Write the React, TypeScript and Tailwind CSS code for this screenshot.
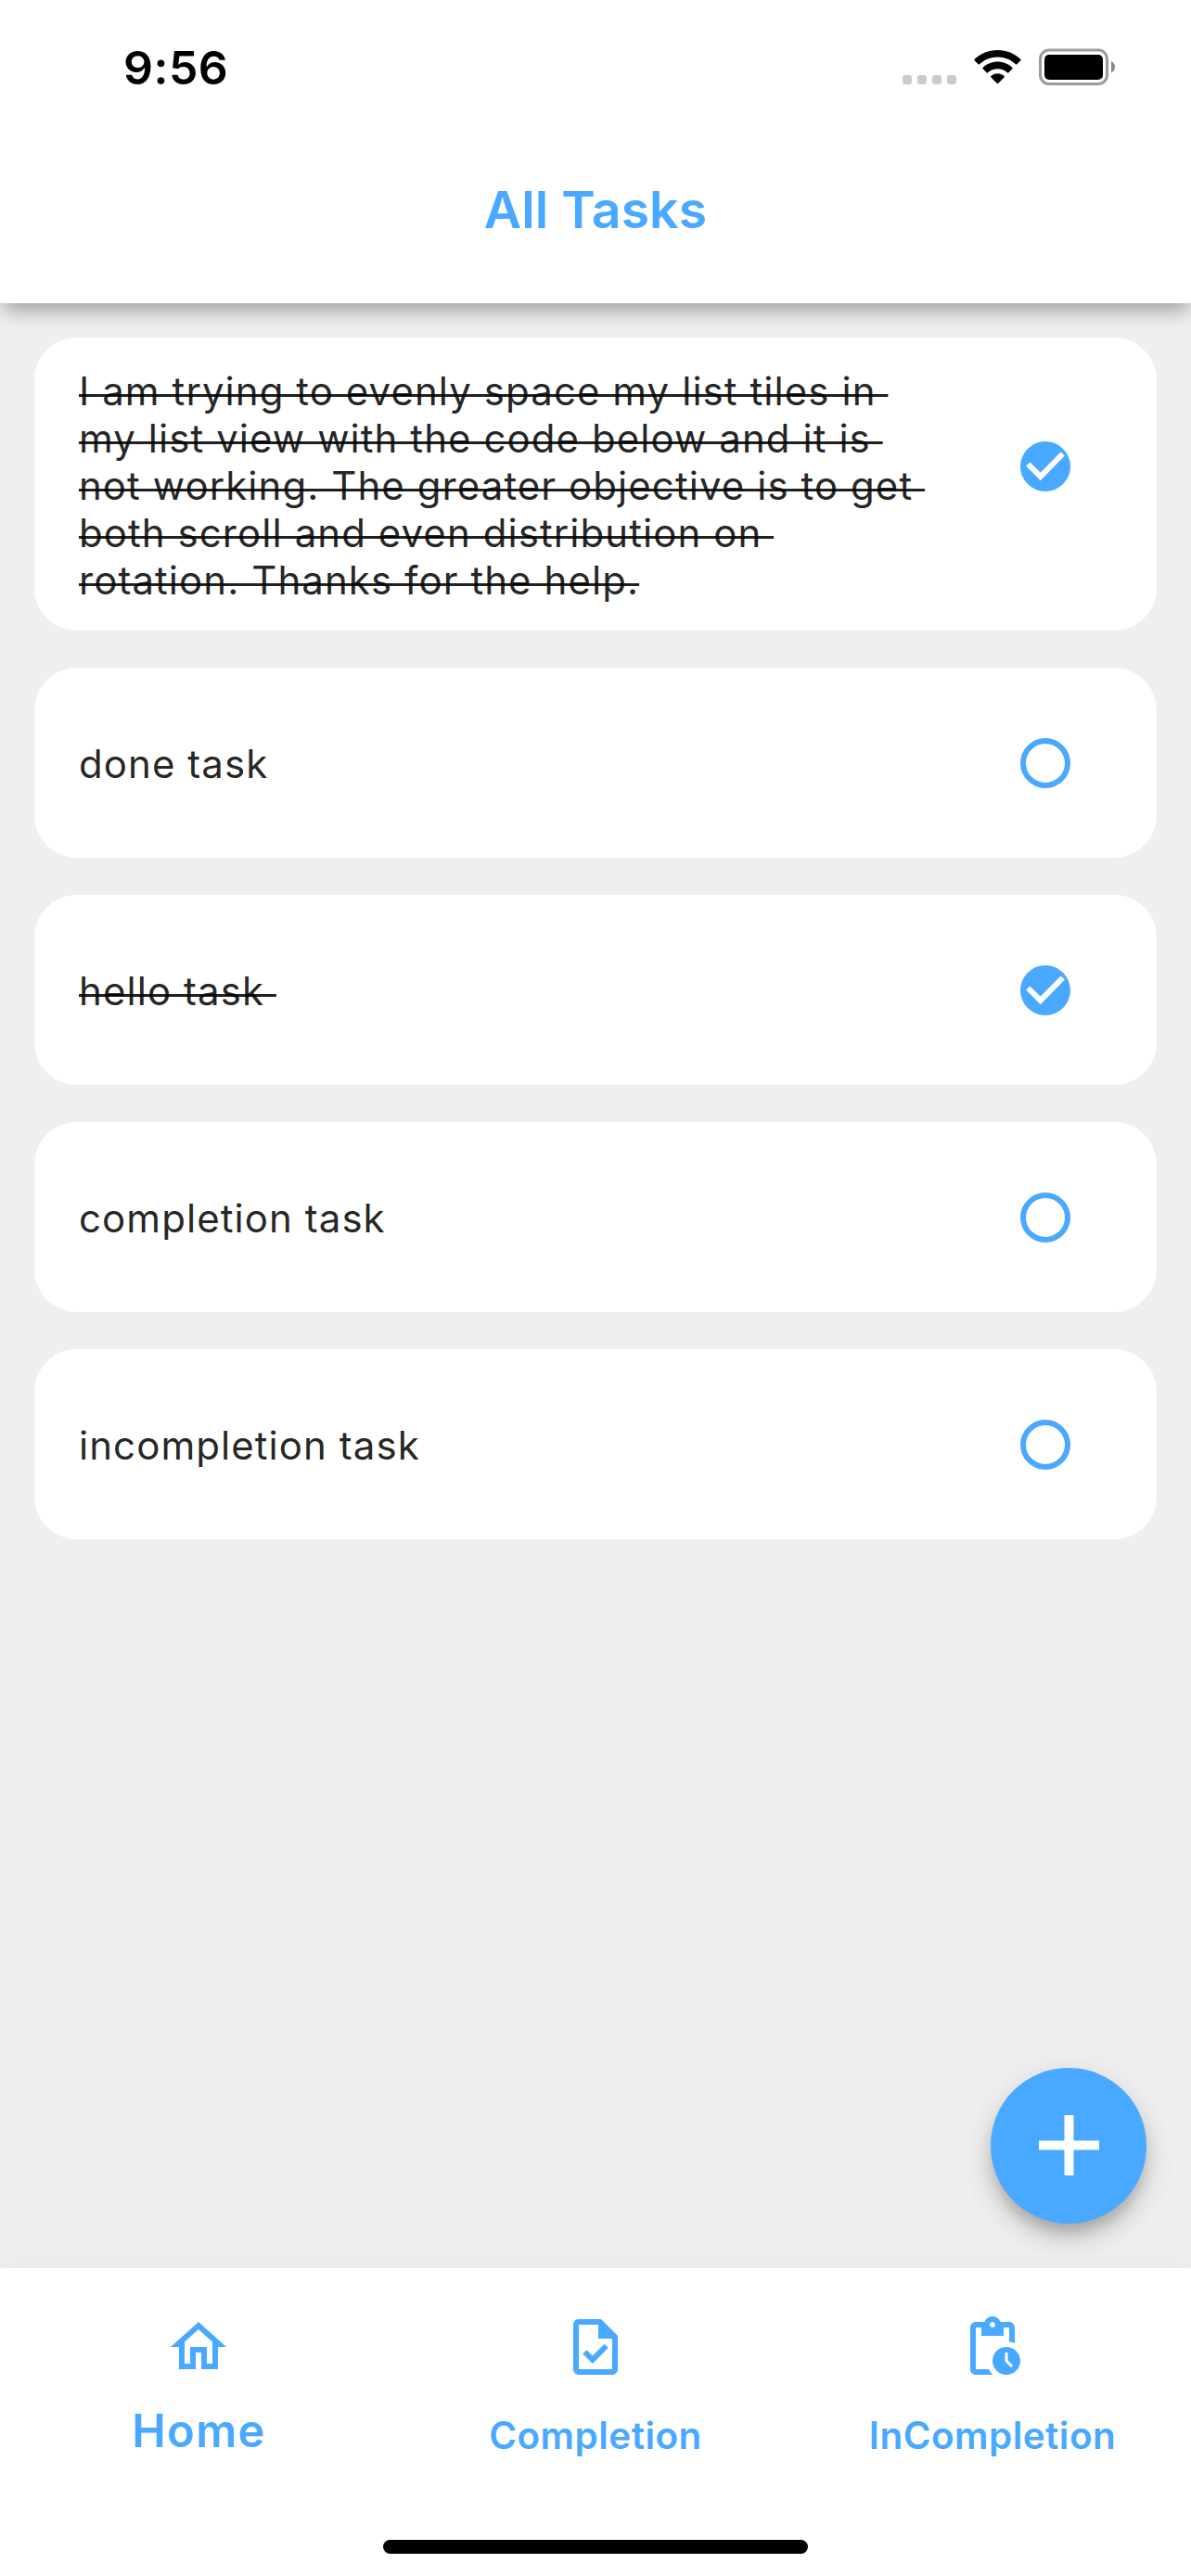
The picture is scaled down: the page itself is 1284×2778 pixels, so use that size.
type Task = { lines: string[]; done: boolean };

const tasks: Task[] = [
  {
    lines: [
      "I am trying to evenly space my list tiles in ",
      "my list view with the code below and it is ",
      "not working. The greater objective is to get ",
      "both scroll and even distribution on ",
      "rotation. Thanks for the help.",
    ],
    done: true,
  },
  { lines: ["done task"], done: false },
  { lines: ["hello task "], done: true },
  { lines: ["completion task"], done: false },
  { lines: ["incompletion task"], done: false },
];

const icons = {
  home: "M12 5.69l5 4.5V18h-2v-6H9v6H7v-7.81l5-4.5M12 3L2 12h3v8h6v-6h2v6h6v-8h3L12 3z",
  completion:
    "M14,2H6C4.9,2,4.01,2.9,4.01,4L4,20c0,1.1,0.89,2,1.99,2H18c1.1,0,2-0.9,2-2V8L14,2z M18,20H6V4h7v5h5V20z M8.82,13.05L7.4,14.46L10.94,18l5.66-5.66l-1.41-1.41l-4.24,4.24L8.82,13.05z",
  incompletion:
    "M17,12c-2.76,0-5,2.24-5,5s2.24,5,5,5c2.76,0,5-2.24,5-5S19.76,12,17,12z M18.65,19.35l-2.15-2.15V14h1v2.79l1.85,1.85L18.65,19.35z M18,3h-3.18C14.4,1.84,13.3,1,12,1S9.6,1.84,9.18,3H6C4.9,3,4,3.9,4,5v15c0,1.1,0.9,2,2,2h6.11c-0.59-0.57-1.07-1.25-1.42-2H6V5h2v3h8V5h2v5.08c0.71,0.1,1.38,0.31,2,0.6V5C20,3.9,19.1,3,18,3z M12,5c-0.55,0-1-0.45-1-1c0-0.55,0.45-1,1-1c0.55,0,1,0.45,1,1C13,4.55,12.55,5,12,5z",
};

function StatusBar() {
  return (
    <div className="flex justify-between pt-[43px] pr-[82px] pl-[133px] text-black">
      <span className="text-[50px] leading-[60px] font-semibold tracking-[0.5px]">9:56</span>
      <div className="flex h-[50px] items-end">
        <div className="mb-0.5 flex gap-1.5">
          {[0, 1, 2, 3].map((i) => (
            <span key={i} className="size-2.5 rounded-[3px] bg-[#cbcbcb]" />
          ))}
        </div>
        <svg viewBox="0 0 51 37" className="mb-0.5 ml-[19px] h-[37px] w-[51px]" fill="currentColor">
          <path d="M25.5 0C35 0 43.7 3.7 50.2 9.7c.6.5.6 1.1.1 1.6l-3.9 3.9c-.5.5-1 .5-1.5 0C39.7 10.3 33 7.5 25.5 7.5S11.3 10.3 6.1 15.2c-.5.5-1 .5-1.5 0L.7 11.3c-.5-.5-.5-1.1.1-1.6C7.3 3.7 16 0 25.5 0z" />
          <path d="M25.5 12.6c6 0 11.5 2.3 15.7 6.1.6.5.6 1.1.1 1.6l-3.9 3.9c-.5.5-1 .5-1.5.1-2.8-2.5-6.4-4-10.4-4s-7.6 1.5-10.4 4c-.5.4-1 .4-1.5-.1l-3.9-3.9c-.5-.5-.5-1.1.1-1.6 4.2-3.8 9.7-6.1 15.7-6.1z" />
          <path d="M25.5 25.2c2.6 0 5 1 6.9 2.6.6.5.6 1.1.1 1.6l-6.2 6.3c-.5.5-1.1.5-1.6 0l-6.2-6.3c-.5-.5-.5-1.1.1-1.6 1.9-1.6 4.3-2.6 6.9-2.6z" />
        </svg>
        <svg viewBox="0 0 82 40" className="mb-px ml-[19px] h-10 w-[82px]">
          <rect x="1.5" y="2" width="72" height="36.5" rx="9.5" fill="none" stroke="#9b9b9b" strokeWidth="3" />
          <rect x="6" y="7" width="63" height="27" rx="5" fill="#000" />
          <path d="M78 14c2.5 1 4 3.4 4 6.3s-1.5 5.3-4 6.3z" fill="#8a8a8a" />
        </svg>
      </div>
    </div>
  );
}

function Toggle({ done }: { done: boolean }) {
  return (
    <svg viewBox="0 0 54 54" className="size-[54px] shrink-0" fill="none">
      {done ? (
        <>
          <circle cx="27" cy="27" r="27" fill="#49a8ff" />
          <path d="M8.3 24.5l13.4 13.4L45.7 13.5" stroke="#fff" strokeWidth="6" />
        </>
      ) : (
        <circle cx="27" cy="27" r="24" stroke="#49a8ff" strokeWidth="6" />
      )}
    </svg>
  );
}

function TaskCard({ task }: { task: Task }) {
  const tall = task.lines.length > 1;
  return (
    <li
      className={`flex justify-between rounded-[46px] bg-white pr-[93px] pl-12 ${
        tall ? "h-[316px] items-start pt-8" : "h-[205px] items-center"
      }`}
    >
      <div
        className={`text-[42px] leading-[51px] tracking-[1.06px] whitespace-pre text-black/87 ${
          tall ? "" : "pt-px"
        } ${
          task.done
            ? "underline decoration-[3px] underline-offset-[-12px] [text-decoration-skip-ink:none]"
            : ""
        }`}
      >
        {task.lines.map((line) => (
          <div key={line}>{line}</div>
        ))}
      </div>
      <div className={tall ? "pt-20" : ""}>
        <Toggle done={task.done} />
      </div>
    </li>
  );
}

function NavItem({ icon, label, active }: { icon: string; label: string; active?: boolean }) {
  return (
    <a className="flex flex-1 flex-col items-center font-[570]">
      <svg viewBox="0 0 24 24" className="size-[72px]" fill="currentColor">
        <path d={icon} />
      </svg>
      <span
        className={
          active
            ? "mt-[25px] ml-px text-[49px] leading-[60px] tracking-[1.2px]"
            : "mt-[35px] text-[40.5px] leading-[50px] tracking-[0.45px]"
        }
      >
        {label}
      </span>
    </a>
  );
}

export default function App() {
  return (
    <div className="relative flex h-[2778px] w-[1284px] flex-col overflow-hidden bg-[#efefef] font-['Inter',sans-serif]">
      <header className="relative h-[327px] bg-white shadow-[0_11px_20px_-3px_rgba(0,0,0,0.33)]">
        <StatusBar />
        <h1 className="mt-[90px] text-center text-[55.5px] leading-[66px] font-[570] text-[#49a8ff]">
          All Tasks
        </h1>
      </header>

      <ul className="flex flex-1 flex-col gap-10 px-[37px] pt-[37px]">
        {tasks.map((task) => (
          <TaskCard key={task.lines[0]} task={task} />
        ))}
      </ul>

      <button
        aria-label="Add task"
        className="absolute right-12 bottom-[380px] flex size-[168px] items-center justify-center rounded-full bg-[#49a8ff] pb-px shadow-[0_12px_15px_-3px_rgba(0,0,0,0.18),0_16px_30px_0_rgba(0,0,0,0.14),0_3px_48px_0_rgba(0,0,0,0.05)]"
      >
        <svg viewBox="0 0 65 65" className="size-[65px]" stroke="#fff" strokeWidth="10">
          <path d="M32.5 0v65M0 32.5h65" />
        </svg>
      </button>

      <nav className="relative flex h-[332px] flex-col items-center bg-white pt-[49px] text-[#49a8ff] shadow-[0_-6px_24px_rgba(0,0,0,0.027)]">
        <div className="flex w-full">
          <NavItem icon={icons.home} label="Home" active />
          <NavItem icon={icons.completion} label="Completion" />
          <NavItem icon={icons.incompletion} label="InCompletion" />
        </div>
        <div className="mt-auto mb-6 h-[15px] w-[458px] rounded-full bg-black" />
      </nav>
    </div>
  );
}
